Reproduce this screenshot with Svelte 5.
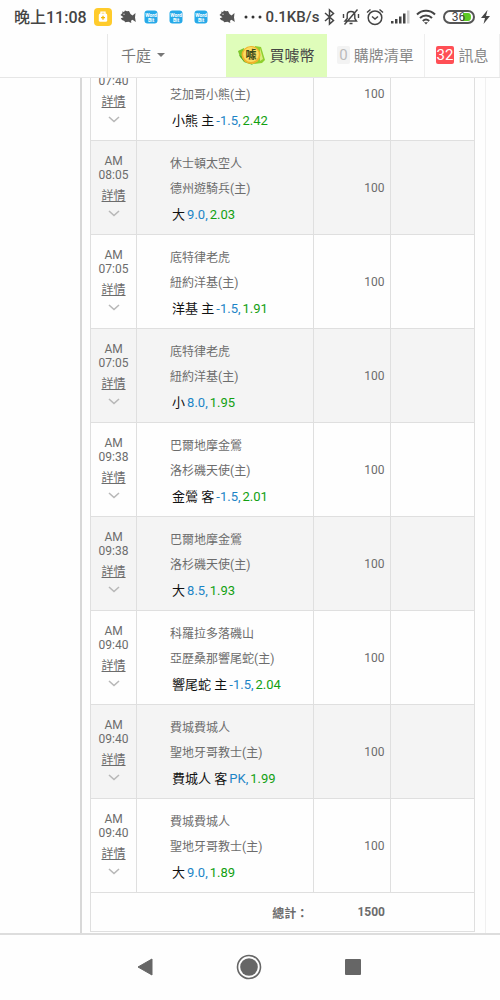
<script>
    // the first row is scrolled under the nav bar, only its lower lines are filled in
    const bets = [
        {ampm: "", time: "07:40", away: "", home: "芝加哥小熊(主)", pick: "小熊 主", line: "-1.5", odds: "2.42", amount: 100},
        {ampm: "AM", time: "08:05", away: "休士頓太空人", home: "德州遊騎兵(主)", pick: "大", line: "9.0", odds: "2.03", amount: 100},
        {ampm: "AM", time: "07:05", away: "底特律老虎", home: "紐約洋基(主)", pick: "洋基 主", line: "-1.5", odds: "1.91", amount: 100},
        {ampm: "AM", time: "07:05", away: "底特律老虎", home: "紐約洋基(主)", pick: "小", line: "8.0", odds: "1.95", amount: 100},
        {ampm: "AM", time: "09:38", away: "巴爾地摩金鶯", home: "洛杉磯天使(主)", pick: "金鶯 客", line: "-1.5", odds: "2.01", amount: 100},
        {ampm: "AM", time: "09:38", away: "巴爾地摩金鶯", home: "洛杉磯天使(主)", pick: "大", line: "8.5", odds: "1.93", amount: 100},
        {ampm: "AM", time: "09:40", away: "科羅拉多落磯山", home: "亞歷桑那響尾蛇(主)", pick: "響尾蛇 主", line: "-1.5", odds: "2.04", amount: 100},
        {ampm: "AM", time: "09:40", away: "費城費城人", home: "聖地牙哥教士(主)", pick: "費城人 客", line: "PK", odds: "1.99", amount: 100},
        {ampm: "AM", time: "09:40", away: "費城費城人", home: "聖地牙哥教士(主)", pick: "大", line: "9.0", odds: "1.89", amount: 100}
    ];
    const total = 1500;
</script>

{#snippet fish()}
    <svg width="16" height="14" viewBox="0 0 16 14">
        <path fill="#555" d="M.5 5 2.500 3 2.200 1.500 4 2 5 .5 7 1.200 9 1l1.500 3 2 1.500L15.500 3 15 7.500l.8 4.500-3.300-2.300-1.500 1 .3 2.300-2.800-1.300L5 12.300 4.500 11 2 10 .8 8.200 3.500 7.300z"/>
        <circle cx="4" cy="4.300" r=".7" fill="#ddd"/>
    </svg>
{/snippet}

{#snippet word()}
    <svg class="word" width="14" height="14" viewBox="0 0 14 14">
        <rect x=".5" y=".5" width="13" height="13" rx="3" fill="#27a9e8"/>
        <text x="7" y="6.500" text-anchor="middle">Word</text>
        <text x="7" y="11.500" text-anchor="middle">Bit</text>
    </svg>
{/snippet}

<div class="phone">
    <header class="status">
        <span class="clock">晚上11:08</span>
        <svg class="bag" width="18" height="18" viewBox="0 0 18 18">
            <rect width="18" height="18" rx="4" fill="#ffcb2b"/>
            <path d="M7 6V4.200h4V6" fill="none" stroke="#fff" stroke-width="1.300"/>
            <rect x="4.800" y="5.500" width="8.400" height="8.300" rx="1.500" fill="#fff"/>
            <path d="M9 7.700v4M7 9.700h4" stroke="#f5b800" stroke-width="1.300"/>
        </svg>
        {@render fish()}
        <div class="words">
            {@render word()}
            {@render word()}
            {@render word()}
        </div>
        {@render fish()}
        <svg class="dots" width="18" height="4" viewBox="0 0 18 4" fill="#333">
            <circle cx="2" cy="2" r="1.500"/>
            <circle cx="9" cy="2" r="1.500"/>
            <circle cx="16" cy="2" r="1.500"/>
        </svg>
        <span class="speed">0.1KB/s</span>
        <div class="system">
            <svg width="11" height="18" viewBox="0 0 11 18" fill="none" stroke="#444" stroke-width="1.500">
                <path d="M1 5 9.500 12.500 5.500 16V2l4 3.500L1 13"/>
            </svg>
            <svg width="18" height="18" viewBox="0 0 18 18" fill="none" stroke="#444" stroke-width="1.400">
                <path d="M3 13h11.500l-1.700-2.500V7c0-2-1.500-3.500-3.800-3.500S5.200 5 5.200 7v3.500zM7.500 15.500h3M15.500 1.500l-13 15M16.500 6v4M1.500 6v4"/>
            </svg>
            <svg width="18" height="18" viewBox="0 0 18 18" fill="none" stroke="#444" stroke-width="1.500">
                <circle cx="9" cy="9.700" r="6.800"/>
                <path d="M6 8.500 9 11l3-2.500M1 4.500 4.500 1.500M17 4.500l-3.500-3"/>
            </svg>
            <svg width="19" height="14" viewBox="0 0 19 14" fill="#444">
                <path d="M0 11h2.500v2.500H0zM4 9h2.500v4.500H4zM8 6.500h2.500v7H8zM12 3.500h2.500v10H12z"/>
                <path fill="#ccc" d="M16 .5h2.500v13H16z"/>
            </svg>
            <svg width="20" height="16" viewBox="0 0 20 16" fill="none" stroke="#444" stroke-width="2">
                <path d="M1 5.500C6 .5 14 .5 19 5.500M4 9c3.500-3.500 8.500-3.500 12 0M6.800 12c2-1.800 4.400-1.800 6.400 0"/>
                <path fill="#444" stroke="none" d="m10 15.500-2-2.200h4z"/>
            </svg>
            <div class="battery"><span>36</span></div>
            <svg width="9" height="14" viewBox="0 0 9 14"><path fill="#444" d="M6.500 0 0 8h4L2.500 14 9 6H5z"/></svg>
        </div>
    </header>

    <nav>
        <button class="user">千庭 <i class="caret"></i></button>
        <a class="buy" href="#buy">
            <svg width="27" height="22" viewBox="0 0 27 22">
                <path fill="#8fcf2e" d="m17 2 6 1 4 13-3 3-9 1z"/>
                <path fill="#d9ec7c" d="m22 4 3 11-3 2z"/>
                <path fill="#7cc62a" d="M0 7 6 4l-1 12-3-3z"/>
                <path fill="#4aa521" d="m1 11 5 7 9 3-6-6z"/>
                <ellipse cx="13" cy="11" rx="9.500" ry="9" fill="#eeb32a"/>
                <ellipse cx="13" cy="10.500" rx="7.800" ry="7.500" fill="#fbdc62"/>
                <text x="13" y="15" text-anchor="middle">噱</text>
            </svg>
            買噱幣
        </a>
        <a class="cart" href="#cart"><span class="badge">0</span>購牌清單</a>
        <a class="inbox" href="#inbox"><span class="badge red">32</span>訊息</a>
    </nav>

    <main>
        <div class="panel">
            <table>
                <colgroup>
                    <col class="col-time">
                    <col class="col-game">
                    <col class="col-amount">
                    <col class="col-result">
                </colgroup>
                <tbody>
                    {#each bets as bet}
                        <tr>
                            <td class="when">
                                <div class="row">{bet.ampm}</div>
                                <div class="row">{bet.time}</div>
                                <a href="#detail">詳情</a>
                                <svg width="12" height="7" viewBox="0 0 12 7"><path d="m1 1 5 4.500L11 1" fill="none" stroke="#b8b8b8" stroke-width="1.600"/></svg>
                            </td>
                            <td class="game">
                                <div class="team">{bet.away}</div>
                                <div class="team">{bet.home}</div>
                                <div class="pick">
                                    <span>{bet.pick}</span>
                                    <span class="line">{bet.line},</span>
                                    <span class="odds">{bet.odds}</span>
                                </div>
                            </td>
                            <td class="amount">{bet.amount}</td>
                            <td></td>
                        </tr>
                    {/each}
                </tbody>
                <tfoot>
                    <tr>
                        <th colspan="2" scope="row">總計：</th>
                        <td class="amount">{total}</td>
                        <td></td>
                    </tr>
                </tfoot>
            </table>
        </div>
    </main>

    <footer>
        <button aria-label="返回"><svg width="16" height="18" viewBox="0 0 16 18"><path fill="#666" stroke="#666" stroke-linejoin="round" d="M1 9 15 1v16z"/></svg></button>
        <button aria-label="主畫面"><svg width="26" height="26" viewBox="0 0 26 26"><circle cx="13" cy="13" r="11.500" fill="none" stroke="#666" stroke-width="1.600"/><circle cx="13" cy="13" r="8.800" fill="#666"/></svg></button>
        <button aria-label="最近使用"><svg width="16" height="16" viewBox="0 0 16 16"><rect width="16" height="16" rx="1" fill="#666"/></svg></button>
    </footer>
</div>

<style>
    :global(body) {
        margin: 0;
        background: #fefefe;
    }

    .phone {
        display: flex;
        flex-direction: column;
        height: 100vh;
        font-family: Roboto, "Noto Sans CJK TC", sans-serif;
        color: #6c6c6c;
    }

    button {
        border: 0;
        padding: 0;
        background: none;
        font: inherit;
        color: inherit;
    }

    .status {
        display: flex;
        align-items: center;
        flex: none;
        height: 34px;
        padding: 0 10px 0 14px;
        color: #444;
        white-space: nowrap;
    }

    .clock {
        padding-bottom: 2px;
        font-size: 16px;
        font-weight: 500;
    }

    .bag {
        margin: 0 8px 0 7px;
    }

    .words {
        display: flex;
        gap: 11px;
        margin: 0 11px 0 8px;
    }

    .word text {
        font-size: 5px;
        font-weight: bold;
        fill: #fff;
    }

    .dots {
        margin: 0 4px 0 9px;
    }

    .speed {
        font-size: 15px;
        font-weight: 500;
    }

    .system {
        display: flex;
        align-items: center;
        justify-content: space-between;
        flex: 1;
        margin-left: 5px;
    }

    .battery {
        width: 24px;
        height: 8px;
        padding: 1px 2px;
        border: 2px solid #555;
        border-radius: 8px;
        background: linear-gradient(90deg, #fff 16px, #5ccb25 16px) content-box;
        font-size: 12px;
        line-height: 8px;
        text-align: center;
    }

    nav {
        display: flex;
        flex: none;
        height: 43px;
        border-bottom: 1px solid #e6e6e6;
        font-size: 15px;
        white-space: nowrap;
    }

    nav a, .user {
        display: flex;
        align-items: center;
        justify-content: center;
        gap: 4px;
        padding-bottom: 2px;
        color: #888;
        text-decoration: none;
    }

    .user {
        flex: 1;
        justify-content: flex-start;
        gap: 6px;
        margin-left: 107px;
        padding-left: 13px;
        border-left: 1px solid #e8e8e8;
        color: #777;
    }

    .caret {
        border: 4px solid transparent;
        border-top-color: #777;
        border-bottom: 0;
    }

    .buy {
        width: 101px;
        background: #dffdba;
    }

    nav .buy {
        color: #444;
    }

    .buy text {
        font-size: 11px;
        font-weight: bold;
        fill: #3b4a1c;
    }

    .cart {
        width: 97px;
        border-right: 1px solid #eee;
    }

    .inbox {
        width: 74px;
        border-right: 1px solid #eee;
    }

    .badge {
        padding: 0 2px;
        border-radius: 2px;
        background: #f3f3f3;
        line-height: 18px;
        color: #bbb;
    }

    .badge.red {
        padding: 0 1px;
        background: #ff4f55;
        color: #fff;
    }

    main {
        display: flex;
        flex-direction: column;
        justify-content: flex-end;
        flex: 1;
        min-height: 0;
        overflow: hidden;
        padding: 0 14px 0 80px;
        border-bottom: 2px solid #ddd;
    }

    .panel {
        padding: 0 10px 1px 8px;
        border-left: 2px solid #d8d8d8;
        border-right: 1px solid #f0f0f0;
    }

    table {
        width: 100%;
        table-layout: fixed;
        border-collapse: collapse;
        border: 1px solid #dfdfdf;
        font-size: 12px;
    }

    .col-time {
        width: 12%;
    }

    .col-game {
        width: 46%;
    }

    .col-amount {
        width: 20%;
    }

    .col-result {
        width: 22%;
    }

    tbody tr:nth-child(even) {
        background: #f4f4f4;
    }

    td, th {
        padding: 0;
        border: 1px solid #dfdfdf;
    }

    .when {
        padding: 13px 0 0;
        line-height: 14px;
        text-align: center;
        vertical-align: top;
    }

    .row {
        height: 14px;
    }

    .when a {
        display: block;
        margin-top: 7px;
        color: #6c6c6c;
    }

    .when svg {
        display: block;
        margin: 7px auto 0;
    }

    .game {
        padding: 11px 0 7px 33px;
        line-height: 25px;
        white-space: nowrap;
    }

    .team {
        height: 25px;
    }

    .pick {
        display: flex;
        gap: 2px;
        padding-left: 2px;
        font-size: 13px;
        color: #111;
    }

    .line {
        color: #1c84c6;
    }

    .odds {
        color: #12a012;
    }

    .amount {
        padding-right: 5px;
        text-align: right;
    }

    tfoot th, tfoot td {
        height: 38px;
        border: 0;
        font-weight: bold;
    }

    tfoot th {
        padding-right: 5px;
        text-align: right;
    }

    footer {
        display: flex;
        align-items: center;
        justify-content: center;
        gap: 83px;
        flex: none;
        height: 63px;
        padding: 0 2px 2px 0;
    }

    footer button {
        display: flex;
    }
</style>
